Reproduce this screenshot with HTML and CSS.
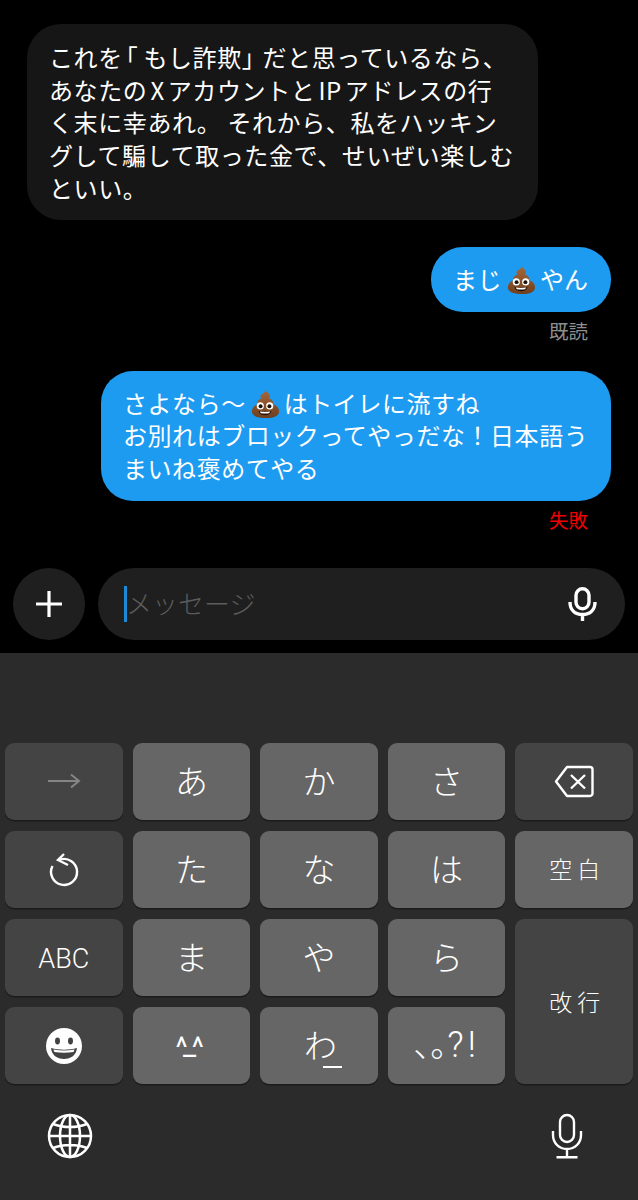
FILE: index.html
```html
<!DOCTYPE html>
<html lang="ja">
<head>
<meta charset="utf-8">
<title>メッセージ</title>
<link rel="stylesheet" href="styles.css">
</head>
<body>
<svg class="defs" width="0" height="0" aria-hidden="true">
  <defs>
    <linearGradient id="poo" x1="0" y1="0" x2="0" y2="1">
      <stop offset="0" stop-color="#a8683a"/>
      <stop offset="1" stop-color="#6f3f1e"/>
    </linearGradient>
    <symbol id="poop" viewBox="0 0 32 32">
      <path fill="url(#poo)" d="M16.5 1c1 2.500 4.200 3.300 4.700 5.800.3 1.500-.3 2.500-1 3.200 2.500.4 4.400 2.200 4.500 4.600 0 .7-.1 1.200-.3 1.700 3.600.7 6.600 3.700 6.600 7.700 0 4.800-5.600 7-14 7s-15-2.200-15-7c0-4 2.900-6.900 6.400-7.700-.3-.6-.4-1.200-.4-1.900.1-2.200 1.900-3.900 4.300-4.300-.8-.6-1.300-1.500-1.100-2.600.4-2.300 5-2.300 5.300-6.500z"/>
      <circle cx="11" cy="18" r="3.800" fill="#fff"/>
      <circle cx="21" cy="18" r="3.800" fill="#fff"/>
      <circle cx="11.300" cy="18.300" r="2.100" fill="#1c120c"/>
      <circle cx="20.700" cy="18.300" r="2.100" fill="#1c120c"/>
      <path fill="#2a1208" d="M9 23.500c4 1 10 1 14 0-.6 3-3.500 4.500-7 4.500s-6.400-1.500-7-4.500z"/>
      <path fill="#fff" d="M10.500 24c3.500.6 7.500.6 11 0-.3 1-.8 1.500-1.200 1.800-2.600.4-6 .4-8.600 0-.5-.4-1-.9-1.200-1.800z"/>
    </symbol>
    <symbol id="mic" viewBox="0 0 32 46">
      <rect x="9" y="2" width="14" height="27" rx="7" fill="none" stroke="currentColor" stroke-width="2.400"/>
      <path d="M2 18v4c0 8 6 14 14 14s14-6 14-14v-4M16 36v8M5.500 44.300h21" fill="none" stroke="currentColor" stroke-width="2.400"/>
    </symbol>
    <symbol id="mic-bold" viewBox="0 0 29 34">
      <rect x="8" y="1.800" width="13" height="20" rx="6.500" fill="none" stroke="currentColor" stroke-width="3.400"/>
      <path d="M2 15c0 8 5 12.500 12.500 12.500S27 23 27 15M14.500 27v7" fill="none" stroke="currentColor" stroke-width="3.400"/>
    </symbol>
  </defs>
</svg>
<main class="screen">
  <section class="chat">
    <div class="bubble incoming">これを<span class="open">「</span>もし詐欺<span class="close">」</span>だと思っているなら、<br>あなたの<span class="latin">X</span>アカウントと<span class="latin">IP</span>アドレスの行<br>く末に幸あれ。 それから、私をハッキン<br>グして騙して取った金で、せいぜい楽しむ<br>といい。</div>
    <div class="bubble outgoing short">まじ<svg class="emoji"><use href="#poop"/></svg><span class="tight">やん</span></div>
    <div class="status read">既読</div>
    <div class="bubble outgoing long">さよなら～<svg class="emoji"><use href="#poop"/></svg>はトイレに流すね<br>お別れはブロックってやっだな！日本語う<br>まいね褒めてやる</div>
    <div class="status failed">失敗</div>
    <div class="composer">
      <button class="plus" type="button" aria-label="追加">
        <svg width="30" height="30" viewBox="0 0 30 30"><path d="M15 2v26M2 15h26" stroke="#fff" stroke-width="3.200" fill="none"/></svg>
      </button>
      <div class="field">
        <span class="caret"></span>
        <span class="placeholder">メッセージ</span>
        <svg class="field-mic"><use href="#mic-bold"/></svg>
      </div>
    </div>
  </section>
  <section class="keyboard">
    <div class="keys">
      <div class="key dark">
        <svg width="34" height="16" viewBox="0 0 34 16"><path d="M1 8h31M24 1.500 32 8l-8 6.500" fill="none" stroke="#858585" stroke-width="2"/></svg>
      </div>
      <div class="key kana">あ</div>
      <div class="key kana">か</div>
      <div class="key kana">さ</div>
      <div class="key dark">
        <svg width="40" height="33" viewBox="0 0 40 33"><path d="M13 2h23a2.500 2.500 0 0 1 2.500 2.500v24A2.500 2.500 0 0 1 36 31H13L2 16.500z" fill="none" stroke="#fff" stroke-width="2.400" stroke-linejoin="round"/><path d="M17 10 31 23.500M31 10 17 23.500" stroke="#fff" stroke-width="2.400" fill="none"/></svg>
      </div>
      <div class="key dark">
        <svg class="undo" width="32" height="36" viewBox="0 0 32 36"><path d="M12 7.600A13 13 0 1 1 4.500 14" fill="none" stroke="#fff" stroke-width="2.400"/><path d="M16 2 10 8l10 5" fill="none" stroke="#fff" stroke-width="2.400"/></svg>
      </div>
      <div class="key kana">た</div>
      <div class="key kana">な</div>
      <div class="key kana">は</div>
      <div class="key word">空白</div>
      <div class="key dark abc">ABC</div>
      <div class="key kana">ま</div>
      <div class="key kana">や</div>
      <div class="key kana">ら</div>
      <div class="key dark word tall">改行</div>
      <div class="key dark">
        <svg width="36" height="36" viewBox="0 0 36 36"><circle cx="18" cy="18" r="18" fill="#fff"/><ellipse cx="11.500" cy="13" rx="2.500" ry="3.400" fill="#434343"/><ellipse cx="24.500" cy="13" rx="2.500" ry="3.400" fill="#434343"/><path d="M5 20c8 2.200 18 2.200 26 0-.7 7-6 11-13 11S5.700 27 5 20z" fill="#434343"/><path d="M7.500 21.500c7 1.300 14 1.300 21 0-.3 1-.6 2-1 2.500-6 1-13 1-19 0-.5-.6-.8-1.500-1-2.500z" fill="#fff"/></svg>
      </div>
      <div class="key symbols"><span class="smile">^<span class="mouth">_</span>^</span></div>
      <div class="key kana wa">わ<span class="under"></span></div>
      <div class="key punct"><span><span class="marks">、。</span>?!</span></div>
    </div>
    <div class="tools">
      <svg class="globe" width="46" height="46" viewBox="0 0 46 46"><g fill="none" stroke="#fff" stroke-width="2.500"><circle cx="23" cy="23" r="21"/><ellipse cx="23" cy="23" rx="10" ry="21"/><path d="M23 2v42M2 23h42M6 11c10 4 24 4 34 0M6 35c10-4 24-4 34 0"/></g></svg>
      <svg class="tool-mic"><use href="#mic"/></svg>
    </div>
  </section>
</main>
</body>
</html>
```
FILE: styles.css
```css
* { box-sizing: border-box; }
html, body { margin: 0; padding: 0; background: #000; }
body {
  width: 638px;
  height: 1200px;
  overflow: hidden;
  font-family: "Noto Sans CJK JP", "Noto Sans", sans-serif;
  font-weight: 300;
  color: #fff;
}
.defs { position: absolute; }
.screen { display: flex; flex-direction: column; height: 1200px; }

.chat {
  height: 653px;
  padding: 24px 0 13px;
  display: flex;
  flex-direction: column;
  background: #000;
}
.bubble {
  font-size: 24px;
  line-height: 32.7px;
  font-weight: 400;
  padding: 16px 22px;
  white-space: nowrap;
}
.incoming {
  width: 511px;
  margin-left: 27px;
  padding-top: 17px;
  padding-bottom: 15px;
  background: #161616;
  border-radius: 34px;
  letter-spacing: .6px;
}
.open { font-feature-settings: "halt"; margin: 0 5px 0 3px; }
.close { font-feature-settings: "halt"; margin: 0 8px 0 0; }
.latin { margin: 0 3px; }
.outgoing {
  align-self: flex-end;
  margin-right: 27px;
  background: #1d9bf0;
  letter-spacing: .55px;
}
.short { width: 180px; height: 65px; margin-top: 27px; border-radius: 32px; }
.tight { letter-spacing: 0; }
.long { width: 510px; height: 130px; border-radius: 32px; }
.emoji {
  width: 30px;
  height: 30px;
  margin: 0 4px;
  vertical-align: -6px;
}
.status {
  align-self: flex-end;
  margin: 6px 50px 0 0;
  font-size: 19.5px;
  line-height: 26px;
  font-weight: 400;
}
.read { color: #8e8e8e; margin-bottom: 27px; }
.failed { color: #f00000; }

.composer {
  margin-top: auto;
  padding: 0 13px;
  display: flex;
  gap: 13px;
}
.plus {
  width: 72px;
  height: 72px;
  padding: 0;
  border: 0;
  border-radius: 50%;
  background: #1f1f1f;
  display: flex;
  align-items: center;
  justify-content: center;
}
.field {
  flex: 1;
  height: 72px;
  border-radius: 36px;
  background: #1f1f1f;
  padding: 0 28px 0 26px;
  display: flex;
  align-items: center;
}
.caret { width: 3px; height: 36px; background: #1d8ad6; }
.placeholder {
  margin: 0 0 4px -1px;
  font-size: 26px;
  color: #5c5c5c;
  flex: 1;
}
.field-mic { width: 29px; height: 34px; color: #fff; }

.keyboard {
  flex: 1;
  background: #2b2b2b;
  padding: 90px 5px 0;
}
.keys {
  display: grid;
  grid-template-columns: repeat(5, 1fr);
  grid-auto-rows: 76.6px;
  gap: 11.5px 10px;
}
.key {
  border-radius: 9px;
  background: #666;
  box-shadow: 0 1.500px 0 #1b1b1b;
  display: flex;
  align-items: center;
  justify-content: center;
}
.dark { background: #444; }
.kana { font-size: 33px; padding-bottom: 3px; }
.word { font-size: 23px; letter-spacing: 5px; padding: 0 0 2px 6px; }
.tall { grid-column: 5; grid-row: 3 / span 2; }
.abc { font-family: Roboto, "Liberation Sans", sans-serif; font-weight: 300; font-size: 27px; padding-top: 3px; }
.undo { margin-top: 2px; }
.symbols { font-family: Roboto, "Liberation Sans", sans-serif; font-size: 29px; font-weight: 400; padding-top: 2px; }
.smile { letter-spacing: -4.500px; margin-right: 8px; }
.mouth { vertical-align: 3px; }
.under {
  width: 19px;
  height: 2px;
  background: #fff;
  align-self: flex-end;
  margin: 0 -8px 13px -14px;
}
.punct { font-family: Roboto, "Liberation Sans", sans-serif; font-size: 36px; letter-spacing: 4px; padding-bottom: 6px; }
.marks { font-family: "Noto Sans CJK JP", sans-serif; font-size: 34px; letter-spacing: -17px; text-spacing-trim: space-all; }

.tools {
  display: flex;
  justify-content: space-between;
  align-items: center;
  padding: 29px 50px 0 42px;
}
.tool-mic { width: 32px; height: 46px; color: #fff; }
```
